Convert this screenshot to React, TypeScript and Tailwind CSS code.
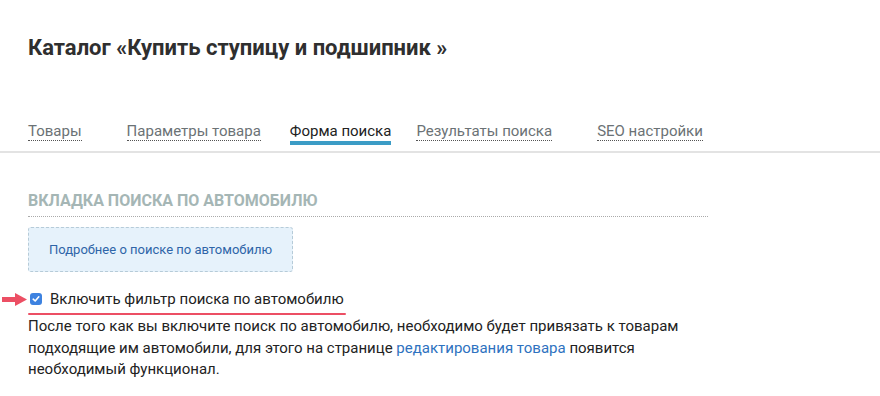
import React from "react";

const tabs = [
  { label: "Товары", active: false },
  { label: "Параметры товара", active: false },
  { label: "Форма поиска", active: true },
  { label: "Результаты поиска", active: false },
  { label: "SEO настройки", active: false },
];

export default function App() {
  return (
    <div className="w-[880px] h-[396px] bg-white overflow-hidden" style={{ fontFamily: "Roboto, 'Noto Sans', sans-serif" }}>
      <div className="pl-[28px] pt-[34px]">
        <h1 className="text-[22px] leading-[28px] font-bold text-[#2f2f2f] m-0">Каталог «Купить ступицу и подшипник »</h1>
      </div>
      <div className="mt-[57px] border-b-2 border-[#e3e3e3] pl-[28px] flex gap-[45px] h-[34px]">
        {tabs.map((t) =>
          t.active ? (
            <div key={t.label} className="relative -ml-[16px] -mr-[20px]">
              <span className="text-[15px] leading-[20px] text-[#222]">{t.label}</span>
              <div className="absolute left-0 right-0 top-[22px] h-[4px] bg-[#3b9cc6]" />
            </div>
          ) : (
            <div key={t.label}>
              <span className="text-[15px] leading-[20px] text-[#6b7275] border-b border-dotted border-[#555]">{t.label}</span>
            </div>
          )
        )}
      </div>
      <div className="pl-[28px] pt-[38px]">
        <div className="w-[680px] border-b border-dotted border-[#aaa] pb-[5px]">
          <div className="text-[16px] leading-[20px] font-bold text-[#a5b6b5] uppercase">Вкладка поиска по автомобилю</div>
        </div>
        <div className="mt-[10px] w-[265px] h-[45px] rounded-[3px] border border-dashed border-[#b6cbd8] bg-[#e6f2fb] flex items-center pl-[20px]">
          <span className="text-[13px] text-[#2e65a8]">Подробнее о поиске по автомобилю</span>
        </div>
        <div className="relative mt-[16px] flex items-center h-[22px]">
          <svg className="absolute left-[-26px] top-[5px]" width="25" height="13" viewBox="0 0 25 13">
            <rect x="0" y="4" width="15" height="5" fill="#ec4f64" />
            <polygon points="13,0 25,6.5 13,13" fill="#ec4f64" />
          </svg>
          <div className="ml-[2px] w-[12px] h-[12px] rounded-[3px] bg-[#3d82e0] flex items-center justify-center">
            <svg width="8" height="8" viewBox="0 0 8 8">
              <path d="M1.2 4.2 L3.2 6 L6.8 1.8" fill="none" stroke="#fff" strokeWidth="1.6" strokeLinecap="round" strokeLinejoin="round" />
            </svg>
          </div>
          <span className="ml-[8px] text-[15px] text-[#222]">Включить фильтр поиска по автомобилю</span>
        </div>
        <div className="mt-[3px] w-[318px] h-[2px] bg-[#ec4f64] rounded-full" />
        <p className="mt-[1px] w-[700px] text-[15px] leading-[21.5px] text-[#222]">
          После того как вы включите поиск по автомобилю, необходимо будет привязать к товарам подходящие им автомобили, для этого на странице <span className="text-[#2e72c0]">редактирования товара</span> появится необходимый функционал.
        </p>
      </div>
    </div>
  );
}
